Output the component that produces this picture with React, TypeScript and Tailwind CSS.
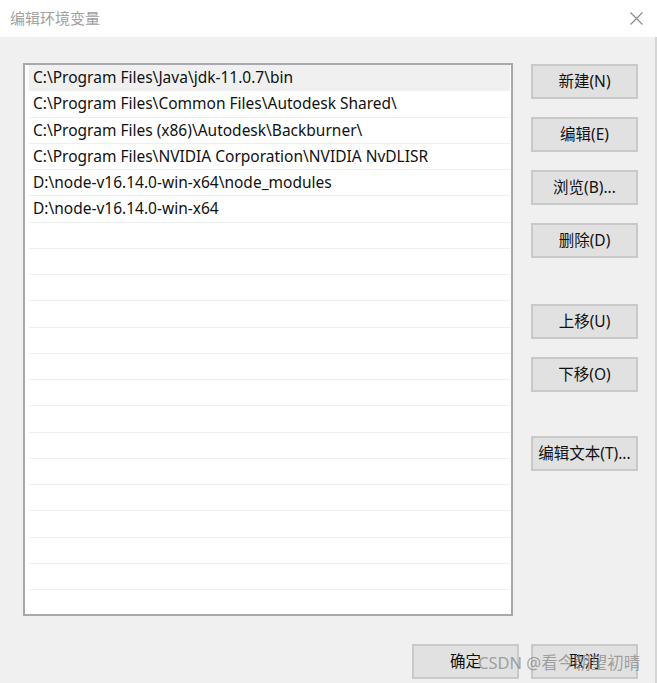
import React from "react";

const paths = [
  "C:\\Program Files\\Java\\jdk-11.0.7\\bin",
  "C:\\Program Files\\Common Files\\Autodesk Shared\\",
  "C:\\Program Files (x86)\\Autodesk\\Backburner\\",
  "C:\\Program Files\\NVIDIA Corporation\\NVIDIA NvDLISR",
  "D:\\node-v16.14.0-win-x64\\node_modules",
  "D:\\node-v16.14.0-win-x64",
];

const rows = [...paths, ...Array(15).fill("")];

const font = { fontFamily: '"Noto Sans", "Noto Sans CJK SC", sans-serif' };

function Btn({ label, className = "" }: { label: string; className?: string }) {
  return (
    <button
      className={`w-[107px] h-[35px] border-2 border-[#c9c9c9] bg-[#e1e1e1] text-[15.5px] text-[#111] flex items-center justify-center ${className}`}
    >
      {label}
    </button>
  );
}

export default function App() {
  return (
    <div className="w-[657px] h-[683px] bg-[#f0f0f0] flex flex-col relative" style={font}>
      {/* 标题栏 */}
      <div className="h-[37px] bg-white flex items-center justify-between pl-[10px] pr-[14px] shrink-0">
        <span className="text-[15px] text-[#a0a0a0]">编辑环境变量</span>
        <svg width="13" height="13" viewBox="0 0 13 13" className="text-[#8a8a8a]">
          <path d="M0.5 0.5 L12.5 12.5 M12.5 0.5 L0.5 12.5" stroke="currentColor" strokeWidth="1.1" fill="none" />
        </svg>
      </div>

      <div className="flex-1 flex border-r-2 border-[#d6d6d6]">
        {/* 列表 */}
        <div className="pl-[23px] pt-[26px]">
          <div className="w-[490px] h-[553px] border-2 border-[#a9a9ad] bg-white pl-[4px] pr-[1px] overflow-hidden">
            {rows.map((p, i) => (
              <div
                key={i}
                className={`h-[26.25px] flex items-center pl-[4px] text-[15.5px] text-[#111] whitespace-nowrap border-b border-[#efefef] ${
                  i === 0 ? "bg-[#f0f0f0]" : ""
                }`}
              >
                {p}
              </div>
            ))}
          </div>
        </div>

        {/* 右侧按钮 */}
        <div className="ml-[18px] pt-[27px] flex flex-col">
          <Btn label="新建(N)" />
          <Btn label="编辑(E)" className="mt-[18px]" />
          <Btn label="浏览(B)..." className="mt-[18px]" />
          <Btn label="删除(D)" className="mt-[18px]" />
          <Btn label="上移(U)" className="mt-[46px]" />
          <Btn label="下移(O)" className="mt-[18px]" />
          <Btn label="编辑文本(T)..." className="mt-[44px]" />
        </div>
      </div>

      {/* 底部按钮 */}
      <div className="absolute left-[412px] top-[644px] flex gap-[12px]">
        <Btn label="确定" />
        <Btn label="取消" />
      </div>

      {/* 水印 */}
      <span className="absolute left-[478px] top-[651px] text-[16.5px] text-[#8c8c8c]/80 pointer-events-none whitespace-nowrap">
        CSDN @看今朝望初晴
      </span>
    </div>
  );
}
